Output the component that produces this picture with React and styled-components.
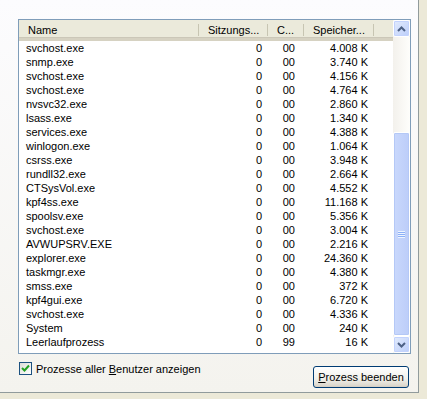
import React from 'react';
import styled, { createGlobalStyle } from 'styled-components';

const GlobalStyle = createGlobalStyle`
  html, body {
    margin: 0;
    padding: 0;
    background: #ece9d8;
    font-family: "Liberation Sans", Arial, sans-serif;
    font-size: 11px;
    color: #000;
  }
`;

const processes = [
  ['svchost.exe', '0', '00', '4.008 K'],
  ['snmp.exe', '0', '00', '3.740 K'],
  ['svchost.exe', '0', '00', '4.156 K'],
  ['svchost.exe', '0', '00', '4.764 K'],
  ['nvsvc32.exe', '0', '00', '2.860 K'],
  ['lsass.exe', '0', '00', '1.340 K'],
  ['services.exe', '0', '00', '4.388 K'],
  ['winlogon.exe', '0', '00', '1.064 K'],
  ['csrss.exe', '0', '00', '3.948 K'],
  ['rundll32.exe', '0', '00', '2.664 K'],
  ['CTSysVol.exe', '0', '00', '4.552 K'],
  ['kpf4ss.exe', '0', '00', '11.168 K'],
  ['spoolsv.exe', '0', '00', '5.356 K'],
  ['svchost.exe', '0', '00', '3.004 K'],
  ['AVWUPSRV.EXE', '0', '00', '2.216 K'],
  ['explorer.exe', '0', '00', '24.360 K'],
  ['taskmgr.exe', '0', '00', '4.380 K'],
  ['smss.exe', '0', '00', '372 K'],
  ['kpf4gui.exe', '0', '00', '6.720 K'],
  ['svchost.exe', '0', '00', '4.336 K'],
  ['System', '0', '00', '240 K'],
  ['Leerlaufprozess', '0', '99', '16 K'],
];

const Arrow = ({ down }) => (
  <svg width="9" height="6" viewBox="0 0 9 6">
    <path
      d={down ? 'M1 1 L4.5 4.5 L8 1' : 'M1 5 L4.5 1.5 L8 5'}
      fill="none"
      stroke="#4d6185"
      strokeWidth="2"
    />
  </svg>
);

const App = () => {
  return (
    <>
      <GlobalStyle />
      <Panel>
        <ListBox>
          <ListArea>
            <Header>
              <HeadCell>Name</HeadCell>
              <HeadCell>Sitzungs...</HeadCell>
              <HeadCell>C...</HeadCell>
              <HeadCell>Speicher...</HeadCell>
              <HeadFill />
            </Header>
            {processes.map(([name, session, cpu, mem], i) => (
              <Row key={i}>
                <NameCell>{name}</NameCell>
                <NumCell>{session}</NumCell>
                <NumCell $pad={9}>{cpu}</NumCell>
                <NumCell>{mem}</NumCell>
              </Row>
            ))}
          </ListArea>
          <ScrollBar>
            <ScrollButton>
              <Arrow />
            </ScrollButton>
            <Track>
              <Thumb>
                <Grip />
              </Thumb>
            </Track>
            <ScrollButton>
              <Arrow down />
            </ScrollButton>
          </ScrollBar>
        </ListBox>
        <Footer>
          <CheckLabel>
            <CheckBox>
              <svg width="9" height="9" viewBox="0 0 9 9">
                <path d="M1 4 L3.5 6.5 L8 1.5" fill="none" stroke="#21a121" strokeWidth="2" />
              </svg>
            </CheckBox>
            <span>
              Prozesse aller <u>B</u>enutzer anzeigen
            </span>
          </CheckLabel>
          <Button>
            <u>P</u>rozess beenden
          </Button>
        </Footer>
      </Panel>
    </>
  );
};

const Panel = styled.div`
  width: 419px;
  height: 393px;
  box-sizing: border-box;
  padding: 19px 0 0 18px;
  background: linear-gradient(to bottom, #fcfcfe, #f4f3ee);
  border-right: 1px solid #919b9c;
  border-bottom: 1px solid #919b9c;
`;

const ListBox = styled.div`
  display: flex;
  width: 393px;
  height: 335px;
  box-sizing: border-box;
  border: 1px solid #7f9db9;
  background: #fff;
`;

const ListArea = styled.div`
  width: 374px;
  display: flex;
  flex-direction: column;
`;

const Header = styled.div`
  display: grid;
  grid-template-columns: 180px 69px 36px 70px 1fr;
  height: 21px;
  box-sizing: border-box;
  padding-top: 2px;
  background: #ebeadb;
  border-bottom: 3px solid #d6d2c2;
  box-shadow: inset 0 -1px 0 #cbc7b8;
`;

const HeadCell = styled.div`
  display: flex;
  align-items: center;
  padding-left: 9px;
  white-space: nowrap;
  overflow: hidden;
  position: relative;
  &::after {
    content: '';
    position: absolute;
    right: 0;
    top: 2px;
    bottom: 2px;
    width: 1px;
    background: #c7c5b2;
    box-shadow: 1px 0 0 #fff;
  }
`;

const HeadFill = styled.div``;

const Row = styled.div`
  display: grid;
  grid-template-columns: 180px 69px 36px 70px;
  height: 14px;
  line-height: 14px;
`;

const NameCell = styled.div`
  padding-left: 7px;
  white-space: nowrap;
`;

const NumCell = styled.div`
  text-align: right;
  padding-right: ${({ $pad }) => $pad || 6}px;
  white-space: nowrap;
`;

const ScrollBar = styled.div`
  width: 17px;
  display: flex;
  flex-direction: column;
  background: #f7f6f1;
`;

const ScrollButton = styled.div`
  width: 17px;
  height: 17px;
  box-sizing: border-box;
  display: flex;
  align-items: center;
  justify-content: center;
  border: 1px solid #fff;
  border-radius: 2px;
  background: linear-gradient(to bottom right, #e3ecfd, #bccefa);
  box-shadow: inset 0 0 0 1px #c3d3fd;
`;

const Track = styled.div`
  flex: 1;
  display: flex;
  flex-direction: column;
  padding-top: 95px;
  background: linear-gradient(to right, #f3f1ec, #fefefb);
`;

const Thumb = styled.div`
  flex: 1;
  display: flex;
  align-items: center;
  justify-content: center;
  box-sizing: border-box;
  border: 1px solid #fff;
  border-radius: 2px;
  background: linear-gradient(to right, #c9d8fc, #bccdf9);
  box-shadow: inset 0 0 0 1px #b4c8f6;
`;

const Grip = styled.div`
  width: 7px;
  height: 7px;
  background: repeating-linear-gradient(
    to bottom,
    #eef4fe 0,
    #eef4fe 1px,
    #8cb0f8 1px,
    #8cb0f8 2px
  );
`;

const Footer = styled.div`
  display: flex;
  justify-content: space-between;
  align-items: flex-start;
  width: 391px;
  padding-top: 8px;
`;

const CheckLabel = styled.label`
  display: flex;
  align-items: center;
  gap: 4px;
  margin-left: 1px;
  height: 13px;
`;

const CheckBox = styled.span`
  width: 13px;
  height: 13px;
  box-sizing: border-box;
  display: flex;
  align-items: center;
  justify-content: center;
  border: 1px solid #1c5180;
  background: linear-gradient(to bottom right, #dcdcd7, #ffffff);
`;

const Button = styled.button`
  width: 96px;
  height: 22px;
  margin-top: 4px;
  padding: 0;
  font-family: "Liberation Sans", Arial, sans-serif;
  font-size: 11px;
  color: #000;
  border: 1px solid #003c74;
  border-radius: 3px;
  background: linear-gradient(to bottom, #ffffff, #f0f0ea 60%, #d8d2c6);
  box-shadow: inset 0 -1px 0 #d6d0c5;
`;

export default App;
